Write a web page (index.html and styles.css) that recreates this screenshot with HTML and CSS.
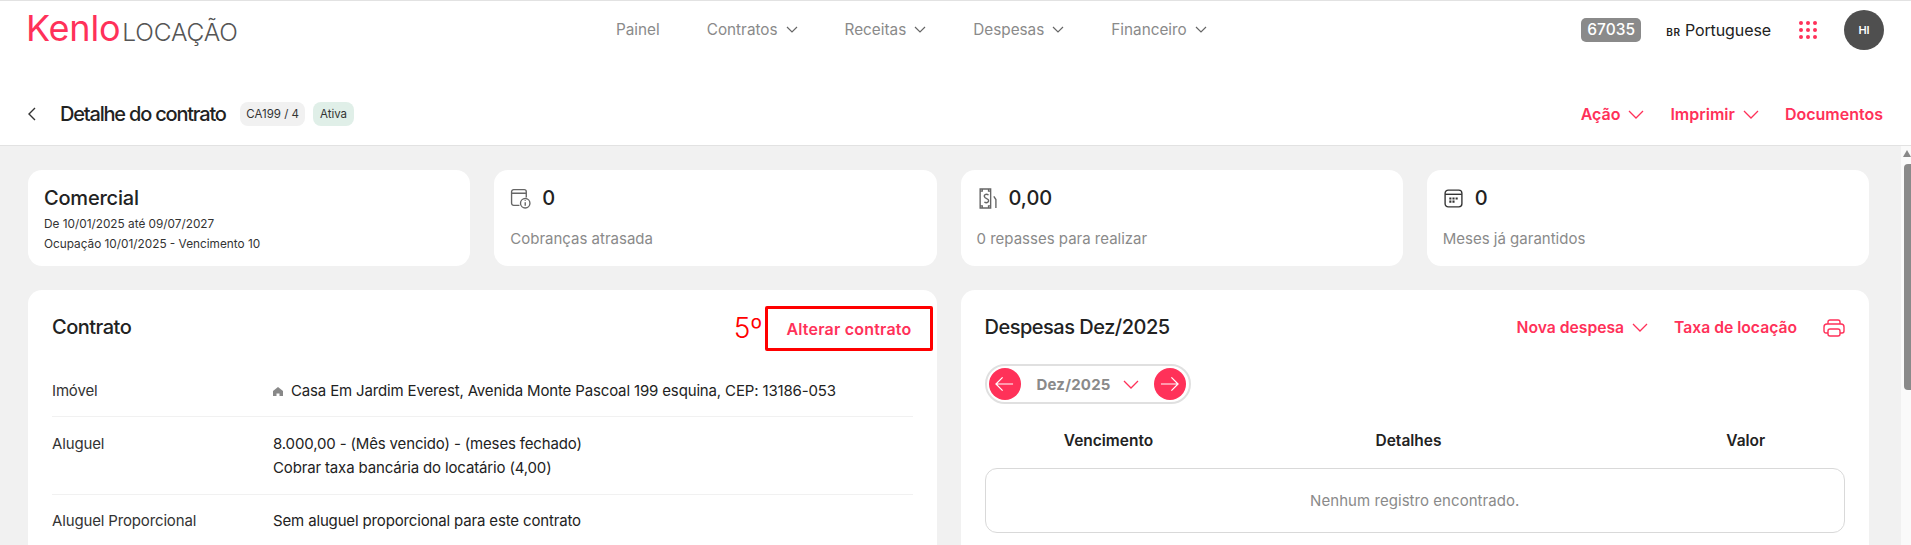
FILE: index.html
```html
<!DOCTYPE html>
<html lang="pt-BR">
<head>
    <meta charset="UTF-8">
    <title>Detalhe do contrato</title>
    <link rel="stylesheet" href="styles.css">
</head>
<body>
    <header class="topbar">
        <div class="logo"><span class="logo-name">Kenlo</span><span class="logo-product">LOCAÇÃO</span></div>
        <nav class="menu">
            <a>Painel</a>
            <a>Contratos <svg class="chev-sm" viewBox="0 0 12 7"><path d="M1 1l5 5 5-5"/></svg></a>
            <a>Receitas <svg class="chev-sm" viewBox="0 0 12 7"><path d="M1 1l5 5 5-5"/></svg></a>
            <a>Despesas <svg class="chev-sm" viewBox="0 0 12 7"><path d="M1 1l5 5 5-5"/></svg></a>
            <a>Financeiro <svg class="chev-sm" viewBox="0 0 12 7"><path d="M1 1l5 5 5-5"/></svg></a>
        </nav>
        <div class="top-right">
            <span class="code-badge">67035</span>
            <span class="lang"><b>BR</b> Portuguese</span>
            <svg class="apps" viewBox="0 0 18 18">
                <circle cx="2" cy="2" r="2"/><circle cx="9" cy="2" r="2"/><circle cx="16" cy="2" r="2"/>
                <circle cx="2" cy="9" r="2"/><circle cx="9" cy="9" r="2"/><circle cx="16" cy="9" r="2"/>
                <circle cx="2" cy="16" r="2"/><circle cx="9" cy="16" r="2"/><circle cx="16" cy="16" r="2"/>
            </svg>
            <span class="avatar">HI</span>
        </div>
    </header>

    <section class="subbar">
        <svg class="back" viewBox="0 0 8 14"><path d="M7 1L1 7l6 6"/></svg>
        <h1>Detalhe do contrato</h1>
        <span class="tag">CA199 / 4</span>
        <span class="tag tag-green">Ativa</span>
        <div class="sub-actions">
            <a class="action">Ação <svg class="chev" viewBox="0 0 16 9"><path d="M1 1l7 7 7-7"/></svg></a>
            <a class="action">Imprimir <svg class="chev" viewBox="0 0 16 9"><path d="M1 1l7 7 7-7"/></svg></a>
            <a class="action">Documentos</a>
        </div>
    </section>

    <main class="content">
        <div class="cards">
            <div class="card">
                <div class="card-title">Comercial</div>
                <div class="card-line">De 10/01/2025 até 09/07/2027</div>
                <div class="card-line">Ocupação 10/01/2025 - Vencimento 10</div>
            </div>
            <div class="card">
                <div class="stat">
                    <svg class="stat-icon" viewBox="0 0 20 20"><path d="M9 16.500H3.500a2 2 0 0 1-2-2v-11a2 2 0 0 1 2-2h10a2 2 0 0 1 2 2V9M1.500 5h14"/><circle cx="14.500" cy="14.500" r="4.500"/><path d="M14.500 13.500v3.500M14.500 11.500v.6"/></svg>
                    <span>0</span>
                </div>
                <div class="stat-label">Cobranças atrasada</div>
            </div>
            <div class="card">
                <div class="stat">
                    <svg class="stat-icon" viewBox="0 0 20 20"><path d="M3 1h10v18H3zM5 1v2H3M11 1v2h2M3 17h2v2M13 17h-2v2M16 8l2 3v8"/><path d="M11 6.500C8 5 6 7 7.500 9l3 2c1.500 1.500-.5 4-3.500 2.500"/></svg>
                    <span>0,00</span>
                </div>
                <div class="stat-label">0 repasses para realizar</div>
            </div>
            <div class="card">
                <div class="stat">
                    <svg class="stat-icon dark" viewBox="0 0 20 20"><rect x="2" y="2" width="16" height="16" rx="3"/><path d="M2 6h16"/><path class="dots" d="M6 9h2v2H6zM9 9h2v2H9zM12 9h2v2h-2zM6 12h2v2H6zM9 12h2v2H9z"/></svg>
                    <span>0</span>
                </div>
                <div class="stat-label">Meses já garantidos</div>
            </div>
        </div>

        <div class="panels">
            <section class="panel">
                <div class="panel-head">
                    <h2>Contrato</h2>
                    <a class="action edit-link">
                        <span class="step">5º</span>
                        Alterar contrato
                    </a>
                </div>
                <div class="row row-first">
                    <div class="row-label">Imóvel</div>
                    <div class="row-value"><svg class="home" viewBox="0 0 10 9"><path d="M5 0L0 4v5h3.500V6.500h3V9H10V4z"/></svg>Casa Em Jardim Everest, Avenida Monte Pascoal 199 esquina, CEP: 13186-053</div>
                </div>
                <div class="row">
                    <div class="row-label">Aluguel</div>
                    <div class="row-value">8.000,00 - (Mês vencido) - (meses fechado)<br>Cobrar taxa bancária do locatário (4,00)</div>
                </div>
                <div class="row row-last">
                    <div class="row-label">Aluguel Proporcional</div>
                    <div class="row-value">Sem aluguel proporcional para este contrato</div>
                </div>
            </section>

            <section class="panel">
                <div class="panel-head">
                    <h2>Despesas Dez/2025</h2>
                    <div class="panel-actions">
                        <a class="action">Nova despesa <svg class="chev" viewBox="0 0 16 9"><path d="M1 1l7 7 7-7"/></svg></a>
                        <a class="action">Taxa de locação</a>
                        <svg class="printer" viewBox="0 0 22 18"><path d="M5 5V3a2 2 0 0 1 2-2h8a2 2 0 0 1 2 2v2M5 14H3a2 2 0 0 1-2-2V8a3 3 0 0 1 3-3h14a3 3 0 0 1 3 3v4a2 2 0 0 1-2 2h-2"/><rect x="5" y="10" width="12" height="7" rx="2"/></svg>
                    </div>
                </div>
                <div class="month-picker">
                    <span class="round-btn"><svg viewBox="0 0 20 16"><path d="M19 8H2M8 1L1 8l7 7"/></svg></span>
                    <span class="month">Dez/2025</span>
                    <svg class="chev" viewBox="0 0 16 9"><path d="M1 1l7 7 7-7"/></svg>
                    <span class="round-btn"><svg viewBox="0 0 20 16"><path d="M1 8h17M12 1l7 7-7 7"/></svg></span>
                </div>
                <div class="table-head">
                    <span>Vencimento</span>
                    <span>Detalhes</span>
                    <span class="col-value">Valor</span>
                </div>
                <div class="empty">Nenhum registro encontrado.</div>
            </section>
        </div>
    </main>

    <div class="scrollbar">
        <span class="scroll-arrow"></span>
        <span class="scroll-thumb"></span>
    </div>
</body>
</html>
```

FILE: styles.css
```css
html, body {
    height: 100%;
    overflow: hidden;
}
body {
    margin: 0;
    padding-right: 10px;
    font-family: Inter, "Noto Sans", sans-serif;
    background-color: #f1f1f1;
    color: #222;
    font-size: 15px;
    box-sizing: border-box;
}
a {
    text-decoration: none;
}
svg {
    fill: none;
    stroke: currentColor;
}

/* top menu */
.topbar {
    height: 58px;
    margin-right: -10px;
    box-sizing: border-box;
    border-top: 1px solid #e2e2e2;
    background: white;
    display: flex;
    align-items: center;
    padding: 0 27px 0 28px;
    position: relative;
}
.logo {
    display: flex;
    align-items: baseline;
    width: 588px;
    margin-top: -4px;
}
.logo-name {
    color: #ff3159;
    font-size: 36px;
    font-weight: 400;
    letter-spacing: -0.2px;
    line-height: 38px;
    margin-left: -2px;
}
.logo-product {
    color: #555;
    font-size: 24.500px;
    font-weight: 300;
    margin-left: 2px;
    letter-spacing: -0.2px;
}
.menu {
    display: flex;
    gap: 47px;
    color: #8a8a8a;
    font-size: 15.300px;
}
.menu a {
    display: flex;
    align-items: center;
    gap: 8px;
}
.chev-sm {
    width: 12px;
    height: 7px;
    color: #666;
    stroke-width: 1.200;
}
.top-right {
    margin-left: auto;
    display: flex;
    align-items: center;
}
.code-badge {
    background: #8a8a8a;
    color: white;
    border-radius: 5px;
    width: 60px;
    height: 24px;
    line-height: 24px;
    text-align: center;
    font-size: 15.500px;
    font-weight: 500;
}
.lang {
    margin-left: 25px;
    font-size: 16px;
    color: #222;
    letter-spacing: -0.1px;
}
.lang b {
    font-size: 10px;
    font-weight: 600;
    letter-spacing: 0.6px;
}
.apps {
    width: 18px;
    height: 18px;
    margin-left: 28px;
    fill: #ff3159;
    stroke: none;
}
.avatar {
    width: 40px;
    height: 40px;
    margin-left: 27px;
    border-radius: 50%;
    background: #4f4f4f;
    color: white;
    font-size: 11px;
    font-weight: 600;
    text-align: center;
    line-height: 40px;
}

/* title bar */
.subbar {
    height: 88px;
    margin-right: -10px;
    box-sizing: border-box;
    border-bottom: 1px solid #e2e2e2;
    background: white;
    display: flex;
    align-items: center;
    padding: 25px 28px 0;
}
.back {
    width: 8px;
    height: 14px;
    stroke-width: 1.400;
    color: #333;
    margin-right: 24px;
}
.subbar h1 {
    margin: 0 14px 0 0;
    font-size: 20px;
    font-weight: 500;
    letter-spacing: -1.200px;
    color: #222;
}
.tag {
    background: #f1f1f1;
    border-radius: 8px;
    height: 24px;
    line-height: 24px;
    padding: 0 6.500px;
    font-size: 11.500px;
    margin-right: 8px;
    color: #333;
}
.tag-green {
    background: #e0efe8;
}
.sub-actions {
    margin-left: auto;
    display: flex;
    gap: 26px;
}
.action {
    color: #ff3159;
    font-weight: 600;
    font-size: 16px;
    display: flex;
    align-items: center;
    gap: 8px;
    white-space: nowrap;
}
.chev {
    width: 16px;
    height: 9px;
    color: #ff3159;
    stroke-width: 1.300;
}

/* cards */
.content {
    padding: 24px 32px 0 28px;
}
.cards {
    display: grid;
    grid-template-columns: repeat(4, 1fr);
    gap: 24px;
}
.card {
    background: white;
    border-radius: 14px;
    height: 96px;
    box-sizing: border-box;
    padding: 16px 16px;
}
.card-title {
    font-size: 20px;
    font-weight: 500;
    line-height: 24px;
    letter-spacing: -0.2px;
}
.card-line {
    font-size: 11.800px;
    line-height: 20px;
    color: #333;
}
.card-title + .card-line {
    margin-top: 4px;
}
.stat {
    display: flex;
    align-items: center;
    gap: 11px;
    font-size: 20px;
    font-weight: 500;
    line-height: 24px;
}
.stat-icon {
    width: 21px;
    height: 21px;
    color: #666;
    stroke-width: 1.300;
}
.stat-icon.dark {
    color: #333;
}
.dots {
    fill: #333;
    stroke: none;
}
.stat-label {
    color: #8a8a8a;
    margin-top: 19px;
}

/* panels */
.panels {
    display: grid;
    grid-template-columns: 1fr 1fr;
    gap: 24px;
    margin-top: 24px;
}
.panel {
    background: white;
    border-radius: 14px;
    padding: 16px 24px 0;
    height: 400px;
}
.panel-head {
    display: flex;
    align-items: center;
    justify-content: space-between;
    height: 45px;
}
.panel-head h2 {
    margin: 0;
    padding-bottom: 4px;
    font-size: 20px;
    font-weight: 500;
    letter-spacing: -0.5px;
}
.panel-actions {
    display: flex;
    align-items: center;
    gap: 26px;
    padding-bottom: 2px;
}
.panel-actions .action {
    font-size: 15.700px;
}
.printer {
    width: 22px;
    height: 18px;
    color: #ff3159;
    stroke-width: 1.400;
}

/* the red outline and step number were added on top of the screen */
.edit-link {
    border: 3px solid #f00;
    border-radius: 2px;
    height: 45px;
    box-sizing: border-box;
    padding: 0 18px;
    margin-right: -20px;
    position: relative;
    letter-spacing: 0.2px;
}
.step {
    position: absolute;
    right: 100%;
    margin-right: 6px;
    top: 1px;
    color: #f00;
    font-size: 28px;
    font-weight: 300;
    line-height: 36px;
    letter-spacing: 0;
}
.row {
    display: flex;
    padding: 15px 0 14px;
    border-bottom: 1px solid #f1f1f1;
    line-height: 24px;
    letter-spacing: -0.15px;
}
.row-first {
    padding: 28px 0 13px;
}
.row-last {
    padding-top: 14px;
    border-bottom: 0;
}
.row-label {
    width: 221px;
    color: #333;
}
.row-value {
    color: #222;
}
.home {
    width: 10px;
    height: 9px;
    margin-right: 8px;
    fill: #888;
    stroke: none;
}

/* month picker */
.month-picker {
    display: flex;
    align-items: center;
    width: 206px;
    height: 40px;
    box-sizing: border-box;
    margin-top: 13px;
    padding: 0 2px;
    border: 2px solid #e0e0e0;
    border-radius: 20px;
}
.round-btn {
    width: 32px;
    height: 32px;
    border-radius: 50%;
    background: #ff3159;
    color: white;
    display: flex;
    align-items: center;
    justify-content: center;
}
.round-btn svg {
    width: 19px;
    height: 16px;
    stroke-width: 1.300;
}
.month {
    margin: 0 12px 0 16px;
    color: #8a8a8a;
    font-weight: 700;
    font-size: 15px;
    letter-spacing: 0.2px;
}
.month-picker .chev {
    margin-right: 15px;
}
.table-head {
    display: grid;
    grid-template-columns: 248px 352px 1fr;
    text-align: center;
    font-weight: 600;
    font-size: 15.500px;
    margin-top: 27px;
    line-height: 20px;
}
.col-value {
    padding-left: 62px;
}
.empty {
    margin-top: 17px;
    height: 65px;
    box-sizing: border-box;
    border: 1px solid #d9d9d9;
    border-radius: 12px;
    color: #8a8a8a;
    text-align: center;
    line-height: 63px;
    letter-spacing: 0.05px;
}

/* fake page scrollbar */
.scrollbar {
    position: absolute;
    right: 0;
    top: 146px;
    bottom: 0;
    width: 10px;
    background: #fafafa;
}
.scroll-arrow {
    position: absolute;
    right: 0;
    top: 4px;
    border-left: 4px solid transparent;
    border-right: 4px solid transparent;
    border-bottom: 7px solid #888;
}
.scroll-thumb {
    position: absolute;
    right: 0;
    top: 18px;
    width: 7px;
    height: 226px;
    background: #8a8a8a;
    border-radius: 4px 0 0 4px;
}
```
